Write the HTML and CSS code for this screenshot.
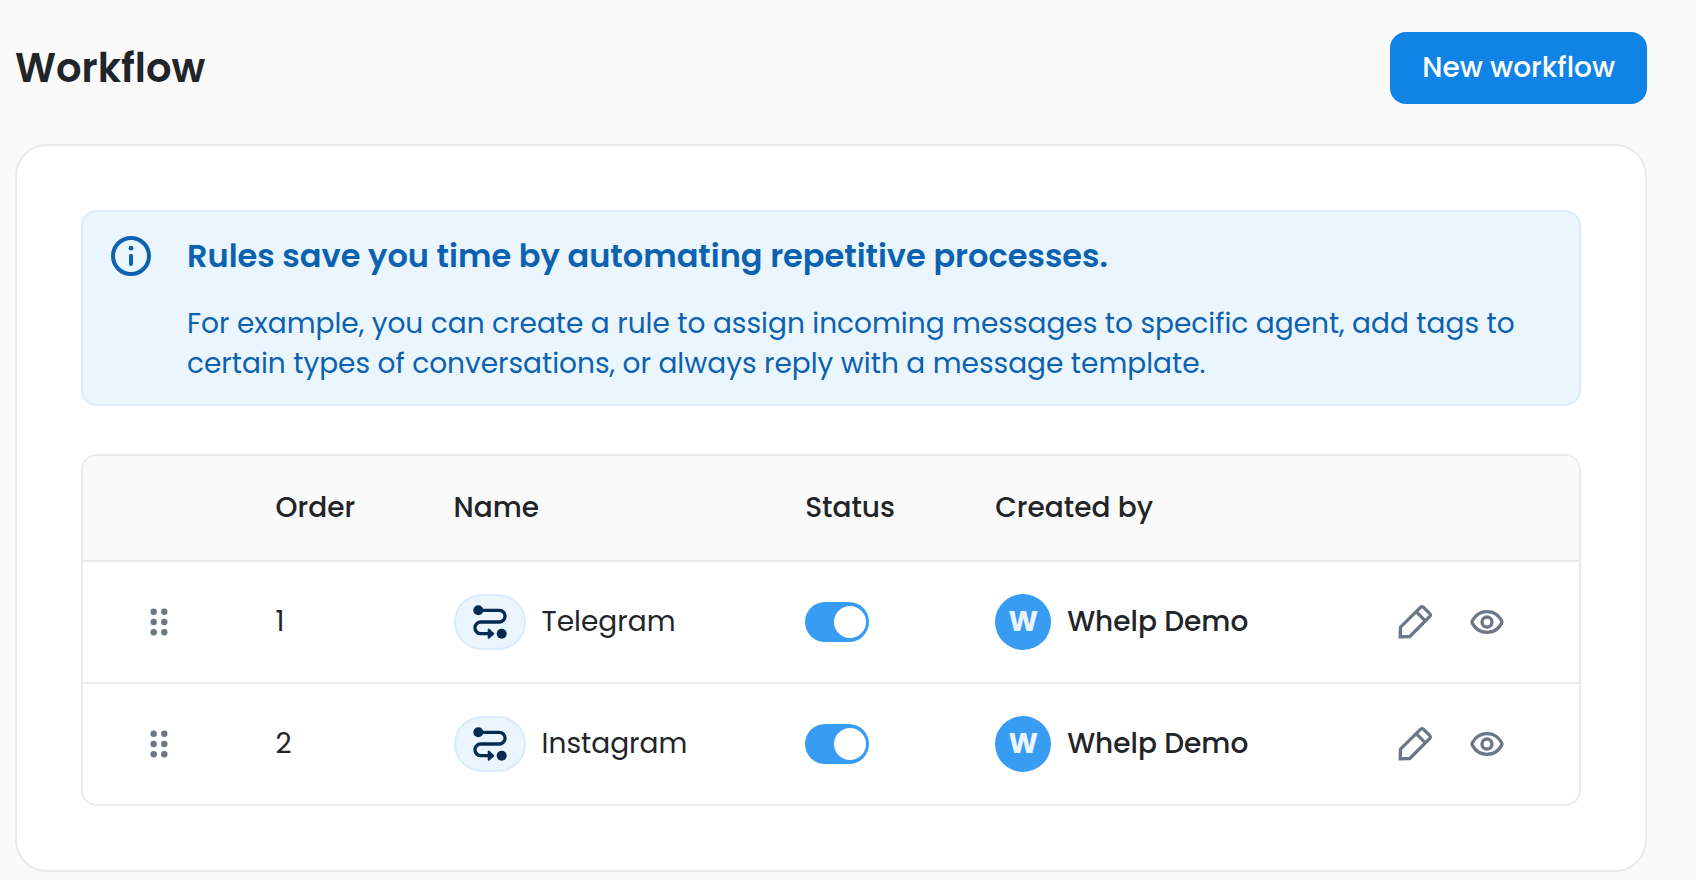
FILE: index.html
```html
<!DOCTYPE html>
<html lang="en">
<head>
<meta charset="utf-8">
<meta name="viewport" content="width=device-width, initial-scale=1">
<title>Workflow</title>
<link rel="stylesheet" href="styles.css">
</head>
<body>
<svg class="sprite" aria-hidden="true">
  <symbol id="icon-drag" viewBox="0 0 40 40">
    <g fill="currentColor">
      <circle cx="14.7" cy="9.7" r="3.2"/><circle cx="25.3" cy="9.7" r="3.2"/>
      <circle cx="14.7" cy="20" r="3.2"/><circle cx="25.3" cy="20" r="3.2"/>
      <circle cx="14.7" cy="30.3" r="3.2"/><circle cx="25.3" cy="30.3" r="3.2"/>
    </g>
  </symbol>
  <symbol id="icon-route" viewBox="0 0 40 40">
    <path d="M8.3 8.3H29.2a5.85 5.85 0 0 1 0 11.7H10.8a5.85 5.85 0 0 0 0 11.7H19" fill="none" stroke="currentColor" stroke-width="3.3"/>
    <circle cx="8.3" cy="8.3" r="5" fill="currentColor"/>
    <circle cx="31.7" cy="31.7" r="5" fill="currentColor"/>
    <path d="M18.7 27.6v8.2l4.5-4.1z" fill="currentColor" stroke="currentColor" stroke-width="2" stroke-linejoin="round"/>
  </symbol>
  <symbol id="icon-pencil" viewBox="0 0 40 40">
    <g fill="none" stroke="currentColor" stroke-width="3.3">
      <path d="M5.2 34.8 5.5 25.2 25.7 5.2q1.3-1.1 2.6 0l6.5 6.5q1.1 1.3 0 2.6L14.8 34.5z"/>
      <path d="m21.2 9.7 9.1 9.1"/>
    </g>
  </symbol>
  <symbol id="icon-eye" viewBox="0 0 40 40">
    <g fill="none" stroke="currentColor" stroke-width="3.3">
      <path d="M5.4 18.6C12 6.7 28 6.7 34.6 18.6q.7 1.4 0 2.8C28 33.3 12 33.3 5.4 21.4q-.7-1.4 0-2.8z"/>
      <circle cx="20" cy="20" r="5"/>
    </g>
  </symbol>
</svg>

<main class="page">
  <header class="page-header">
    <h1 class="page-title">Workflow</h1>
    <button class="btn-primary" type="button">New workflow</button>
  </header>

  <section class="card">
    <div class="notice">
      <svg class="icon" viewBox="0 0 40 40" aria-hidden="true">
        <circle cx="20" cy="20" r="18" fill="none" stroke="currentColor" stroke-width="4"/>
        <circle cx="20" cy="12.2" r="2.4" fill="currentColor"/>
        <path d="M20 19.8v8.2" stroke="currentColor" stroke-width="4" stroke-linecap="round"/>
      </svg>
      <div class="notice-body">
        <h2 class="notice-title">Rules save you time by automating repetitive processes.</h2>
        <p class="notice-text">For example, you can create a rule to assign incoming messages to specific agent, add tags to certain types of conversations, or always reply with a message template.</p>
      </div>
    </div>

    <div class="table-frame">
      <table class="rules">
        <colgroup>
          <col class="col-drag"><col class="col-order"><col class="col-name"><col class="col-status"><col class="col-author"><col class="col-actions">
        </colgroup>
        <thead>
          <tr>
            <td></td>
            <th scope="col">Order</th>
            <th scope="col">Name</th>
            <th scope="col">Status</th>
            <th scope="col">Created by</th>
            <td></td>
          </tr>
        </thead>
        <tbody>
          <tr>
            <td class="drag-cell"><button class="icon-btn" type="button" aria-label="Reorder Telegram"><svg class="icon"><use href="#icon-drag"/></svg></button></td>
            <td>1</td>
            <td><div class="cell"><span class="pill"><svg class="icon"><use href="#icon-route"/></svg></span><span>Telegram</span></div></td>
            <td><input class="toggle" type="checkbox" role="switch" aria-label="Telegram status" checked></td>
            <td><div class="cell author"><span class="avatar">W</span><span>Whelp Demo</span></div></td>
            <td><div class="actions">
              <button class="icon-btn" type="button" aria-label="Edit Telegram"><svg class="icon"><use href="#icon-pencil"/></svg></button>
              <button class="icon-btn" type="button" aria-label="View Telegram"><svg class="icon"><use href="#icon-eye"/></svg></button>
            </div></td>
          </tr>
          <tr>
            <td class="drag-cell"><button class="icon-btn" type="button" aria-label="Reorder Instagram"><svg class="icon"><use href="#icon-drag"/></svg></button></td>
            <td>2</td>
            <td><div class="cell"><span class="pill"><svg class="icon"><use href="#icon-route"/></svg></span><span>Instagram</span></div></td>
            <td><input class="toggle" type="checkbox" role="switch" aria-label="Instagram status" checked></td>
            <td><div class="cell author"><span class="avatar">W</span><span>Whelp Demo</span></div></td>
            <td><div class="actions">
              <button class="icon-btn" type="button" aria-label="Edit Instagram"><svg class="icon"><use href="#icon-pencil"/></svg></button>
              <button class="icon-btn" type="button" aria-label="View Instagram"><svg class="icon"><use href="#icon-eye"/></svg></button>
            </div></td>
          </tr>
        </tbody>
      </table>
    </div>
  </section>
</main>
</body>
</html>
```

FILE: styles.css
```css
*, *::before, *::after { box-sizing: border-box; }

body {
  margin: 0;
  background: #fafafa;
  color: #1f2528;
  font-family: Poppins, Inter, sans-serif;
  font-size: 28px;
  line-height: 40px;
}

h1, h2, p { margin: 0; }

button {
  font: inherit;
  color: inherit;
  border: 0;
  cursor: pointer;
}

.sprite { position: absolute; width: 0; height: 0; }

.icon {
  display: block;
  flex: none;
  width: 40px;
  height: 40px;
}

.page {
  display: flex;
  flex-direction: column;
  gap: 40px;
  padding: 32px 49px 8px 15px;
}

.page-header {
  display: flex;
  align-items: center;
  justify-content: space-between;
}

.page-title {
  font-size: 40px;
  line-height: 56px;
  font-weight: 600;
}

.btn-primary {
  padding: 16px 32px;
  border-radius: 16px;
  background: #1083e7;
  color: #fff;
  font-weight: 500;
}

.card {
  display: flex;
  flex-direction: column;
  gap: 48px;
  padding: 64px;
  border: 2px solid #e9eaea;
  border-radius: 32px;
  background: #fff;
}

.notice {
  display: flex;
  gap: 36px;
  padding: 24px 28px 20px;
  border: 2px solid #d9ebfe;
  border-radius: 16px;
  background: #eaf5fe;
  color: #0a62b0;
}

.notice-body {
  display: flex;
  flex-direction: column;
  gap: 28px;
}

.notice-title {
  font-size: 32px;
  line-height: 40px;
  font-weight: 600;
}

.table-frame {
  overflow: hidden;
  border: 2px solid #e9eaea;
  border-radius: 16px;
}

.rules {
  width: 100%;
  table-layout: fixed;
  border-spacing: 0;
}

.rules th,
.rules td {
  padding: 32px 0 32px 40px;
  border-bottom: 2px solid #e9eaea;
  text-align: left;
  vertical-align: middle;
}

.rules thead th,
.rules thead td {
  background: #fafafa;
  font-weight: 500;
}

.rules tbody tr:last-child td { border-bottom: 0; }
.rules .drag-cell { padding-left: 56px; }

.col-drag { width: 10.2%; }
.col-order { width: 11.9%; }
.col-name { width: 23.5%; }
.col-status { width: 12.7%; }
.col-author { width: 26.7%; }
.col-actions { width: 15%; }

.cell {
  display: flex;
  align-items: center;
  gap: 16px;
}

.author { font-weight: 500; }

.pill {
  display: grid;
  place-items: center;
  width: 72px;
  height: 56px;
  border: 2px solid #d9ebfe;
  border-radius: 28px;
  background: #eaf5fe;
  color: #042c53;
}

.avatar {
  display: grid;
  place-items: center;
  width: 56px;
  height: 56px;
  border-radius: 50%;
  background: #399cf3;
  color: #eaf5fe;
  font-weight: 700;
}

.toggle {
  display: block;
  appearance: none;
  width: 64px;
  height: 40px;
  margin: 0;
  padding: 4px 3px;
  border-radius: 20px;
  background: #b4bcc5;
  cursor: pointer;
}

.toggle::before {
  content: "";
  display: block;
  width: 32px;
  height: 32px;
  border-radius: 50%;
  background: #fff;
}

.toggle:checked { background: #399cf3; }
.toggle:checked::before { margin-left: auto; }

.actions {
  display: flex;
  gap: 32px;
}

.icon-btn {
  display: block;
  padding: 0;
  background: none;
  color: #6b7785;
}
```
